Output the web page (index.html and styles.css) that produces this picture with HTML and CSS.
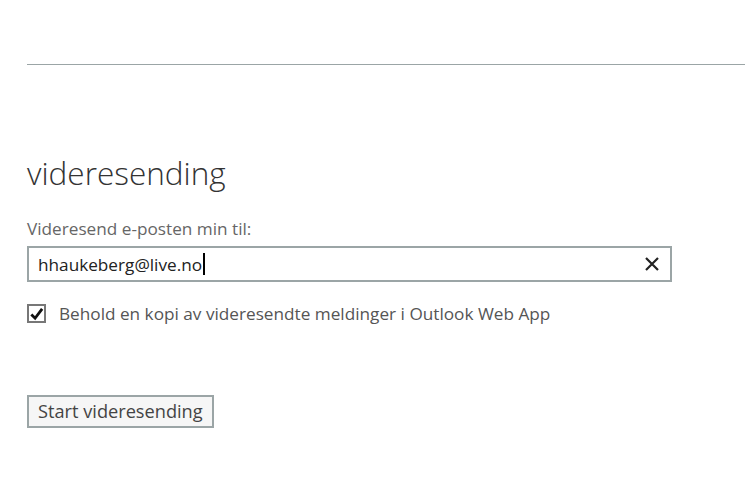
FILE: index.html
```html
<!DOCTYPE html>
<html lang="no">
<head>
<meta charset="utf-8">
<link rel="stylesheet" href="styles.css">
</head>
<body>
<div class="page">
  <div class="topbar"></div>
  <section class="content">
    <h1 class="title">videresending</h1>
    <label class="field-label" for="fwd">Videresend e-posten min til:</label>
    <div class="input-box">
      <span class="input-text">hhaukeberg@live.no</span><span class="caret"></span>
      <span class="clear">
        <svg width="16" height="16" viewBox="0 0 16 16"><path d="M2 2 L14 14 M14 2 L2 14" stroke="#222" stroke-width="2.2" fill="none"/></svg>
      </span>
    </div>
    <div class="check-row">
      <span class="checkbox">
        <svg width="16" height="16" viewBox="0 0 16 16"><path d="M2.5 8.5 L6.5 12.5 L14 2.5" stroke="#111" stroke-width="3" fill="none"/></svg>
      </span>
      <span class="check-label">Behold en kopi av videresendte meldinger i Outlook Web App</span>
    </div>
    <button class="btn">Start videresending</button>
  </section>
</div>
</body>
</html>
```

FILE: styles.css
```css
html, body {
  margin: 0;
  padding: 0;
  background: #ffffff;
}
body {
  font-family: "Open Sans", "Noto Sans", sans-serif;
  color: #333;
}
.page {
  padding-left: 27px;
}
.topbar {
  height: 64px;
  border-bottom: 1px solid #9ba5a6;
}
.content {
  display: flex;
  flex-direction: column;
  align-items: flex-start;
}
.title {
  margin: 88px 0 0 0;
  font-size: 31.5px;
  font-weight: 300;
  line-height: 40px;
  color: #333;
}
.field-label {
  margin-top: 25px;
  font-size: 17.2px;
  line-height: 22px;
  color: #666;
}
.input-box {
  box-sizing: border-box;
  margin-top: 6px;
  width: 645px;
  height: 36px;
  border: 2px solid #9ba5a6;
  display: flex;
  align-items: center;
  padding-left: 9px;
  padding-right: 10px;
}
.input-text {
  font-size: 17.2px;
  color: #222;
}
.caret {
  display: inline-block;
  width: 2px;
  height: 22px;
  background: #000;
  margin-left: 1px;
}
.clear {
  margin-left: auto;
  display: flex;
  align-items: center;
}
.check-row {
  margin-top: 20px;
  display: flex;
  align-items: center;
}
.checkbox {
  box-sizing: border-box;
  width: 19px;
  height: 19px;
  border: 2px solid #777;
  display: flex;
  align-items: center;
  justify-content: center;
}
.check-label {
  margin-left: 13px;
  font-size: 17.2px;
  color: #555;
}
.btn {
  margin-top: 70px;
  box-sizing: border-box;
  height: 33px;
  padding: 0 9px;
  border: 2px solid #9ba5a6;
  background: #f6f6f6;
  font-family: "Open Sans", "Noto Sans", sans-serif;
  font-size: 18.2px;
  color: #444;
  line-height: 27px;
}
```
